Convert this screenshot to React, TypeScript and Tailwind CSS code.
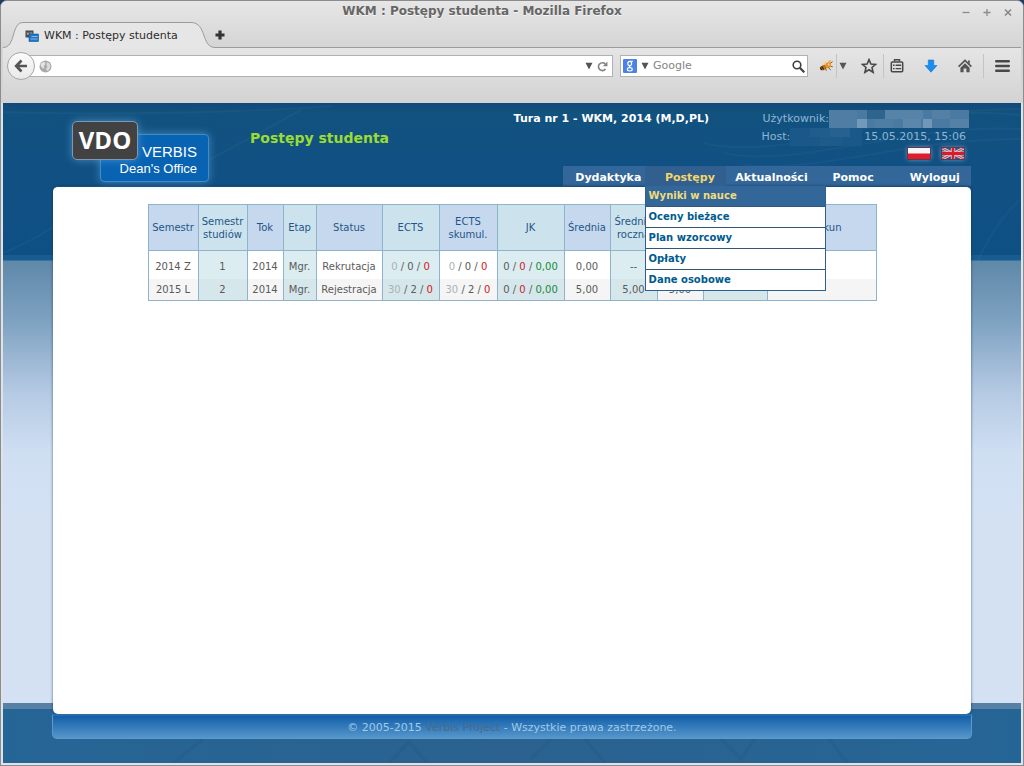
import type { ReactNode } from 'react';

const menuItems = ['Dydaktyka', 'Postępy', 'Aktualności', 'Pomoc', 'Wyloguj'];
const subItems = ['Wyniki w nauce', 'Oceny bieżące', 'Plan wzorcowy', 'Opłaty', 'Dane osobowe'];

const columns = [
  { label: 'Semestr', width: 'w-[50px]' },
  { label: 'Semestr studiów', width: 'w-[49px]' },
  { label: 'Tok', width: 'w-[36px]' },
  { label: 'Etap', width: 'w-[33px]' },
  { label: 'Status', width: 'w-[66px]' },
  { label: 'ECTS', width: 'w-[57px]' },
  { label: 'ECTS skumul.', width: 'w-[58px]' },
  { label: 'JK', width: 'w-[67px]' },
  { label: 'Średnia', width: 'w-[46px]' },
  { label: 'Średnia roczna', width: 'w-[47px]' },
  { label: '', width: 'w-[46px]' },
  { label: '', width: 'w-[64px]' },
  { label: 'Dziekun', width: 'w-[109px]' },
];

// Columns drawn with the teal tint
const tinted = [false, true, false, true, false, true, false, true, false, true, false, true, false];

function Triple({ a, b, c, muted }: { a: string; b: string; c: string; muted?: boolean }) {
  return (
    <>
      <span className={muted ? 'text-[#aab2b4]' : ''}>{a}</span> /{' '}
      <span className={muted ? '' : 'text-[#c41e2a]'}>{b}</span> /{' '}
      <span className={muted ? 'text-[#d01820]' : 'text-[#128a3a]'}>{c}</span>
    </>
  );
}

const rows: ReactNode[][] = [
  [
    '2014 Z', '1', '2014', 'Mgr.', 'Rekrutacja',
    <Triple a="0" b="0" c="0" muted />,
    <Triple a="0" b="0" c="0" muted />,
    <Triple a="0" b="0" c="0,00" />,
    '0,00', '--', '', '', '',
  ],
  [
    '2015 L', '2', '2014', 'Mgr.', 'Rejestracja',
    <Triple a="30" b="2" c="0" muted />,
    <Triple a="30" b="2" c="0" muted />,
    <Triple a="0" b="0" c="0,00" />,
    '5,00', '5,00', '5,00', '', '',
  ],
];

function Caret() {
  return (
    <svg viewBox="0 0 8 8" className="h-2 w-2" aria-hidden="true">
      <path d="M0.5 0.8H7.5L4 7.6Z" fill="#555555" />
    </svg>
  );
}

function Divider() {
  return <div className="h-6 w-px bg-[#c4c4c4]" />;
}

function TitleBar() {
  return (
    <div className="flex h-[21px] items-center pr-[8px]">
      <div className="flex-1 text-center text-[12px] leading-[21px] font-bold text-[#666666] [text-shadow:0_1px_0_#f6f6f6]">
        WKM : Postępy studenta - Mozilla Firefox
      </div>
      <div className="flex gap-[11px] text-[#8b8b8b]">
        <button aria-label="Minimize" className="h-[10px] w-[10px]">
          <svg viewBox="0 0 10 10"><path d="M1.5 5.5H8.5" stroke="currentColor" strokeWidth="1.3" /></svg>
        </button>
        <button aria-label="Maximize" className="h-[10px] w-[10px]">
          <svg viewBox="0 0 10 10"><path d="M1.5 5.5H8.5M5 2V9" stroke="currentColor" strokeWidth="1.3" /></svg>
        </button>
        <button aria-label="Close" className="h-[10px] w-[10px]">
          <svg viewBox="0 0 10 10"><path d="M2 2.5L8 8.5M8 2.5L2 8.5" stroke="currentColor" strokeWidth="1.7" /></svg>
        </button>
      </div>
    </div>
  );
}

function TabStrip() {
  return (
    <div className="flex h-[26px] items-stretch">
      <svg viewBox="0 0 20 26" className="h-[26px] w-[20px]" aria-hidden="true">
        <path d="M0 25.5C13 25.5 8 0.5 20 0.5V26H0Z" fill="#e6e6e6" />
        <path d="M0 25.5C13 25.5 8 0.5 20 0.5" fill="none" stroke="#9b9b9b" />
      </svg>
      <div className="flex w-[168px] items-center border-t border-[#9b9b9b] bg-[#e6e6e6]">
        <svg viewBox="0 0 14 12" className="ml-[2px] h-3 w-[14px]" aria-hidden="true">
          <rect x="0.5" y="0.5" width="8" height="7" fill="#4a4a4a" />
          <path d="M2 2.5L3 5L4 2.5M5 3H7V5H5" stroke="#c8c8c8" fill="none" strokeWidth="0.8" />
          <rect x="4" y="4" width="9.5" height="7.5" fill="#1d75c4" stroke="#17568e" strokeWidth="0.6" />
          <path d="M6.5 6.5H12.5M5.5 9H12.5" stroke="#7fbaf0" />
        </svg>
        <span className="ml-[5px] pt-px text-[11px] whitespace-nowrap text-[#2c2c2c]">WKM : Postępy studenta</span>
      </div>
      <svg viewBox="0 0 24 26" className="h-[26px] w-[24px]" aria-hidden="true">
        <path d="M0 0.5C16 0.5 10 25.5 24 25.5V26H0Z" fill="#e6e6e6" />
        <path d="M0 0.5C16 0.5 10 25.5 24 25.5" fill="none" stroke="#9b9b9b" />
      </svg>
      <div className="flex flex-1 items-center border-b border-[#9b9b9b]">
        <button aria-label="New tab" className="h-[10px] w-[10px]">
          <svg viewBox="0 0 10 10"><path d="M5 0.5V9.5M0.5 5H9.5" stroke="#333333" strokeWidth="3.2" /></svg>
        </button>
      </div>
    </div>
  );
}

function Toolbar() {
  return (
    <div className="h-[55px] bg-linear-to-b from-[#e5e5e5] to-[#d3d3d3]">
      <div className="flex h-9 items-center pr-[11px] pl-[4px]">
        <button
          aria-label="Back"
          className="z-10 -mr-[14px] flex h-7 w-7 items-center justify-center rounded-full border border-[#a6a6a6] bg-linear-to-b from-[#fbfbfb] to-[#e9e9e9]"
        >
          <svg viewBox="0 0 14 14" className="h-[14px] w-[14px]" aria-hidden="true">
            <path d="M7.5 1.5L2.2 7L7.5 12.5M2.5 7H13" fill="none" stroke="#555555" strokeWidth="2.7" />
          </svg>
        </button>
        <div className="flex h-[22px] flex-1 items-center border border-[#b1b1b1] bg-white pr-[4px] pl-[17px]">
          <svg viewBox="0 0 13 13" className="h-[13px] w-[13px]" aria-hidden="true">
            <circle cx="6.5" cy="6.5" r="6" fill="#a9a9a9" />
            <path d="M1.5 4L4 2L6.5 2.5L6 5L4.5 6L5.5 8L4 8.5L2 6.5Z" fill="#e4e4e4" />
            <path d="M8 2L10.5 3.5L11.5 6.5L10 10L8 11L7 8.5L8.5 7L7.5 5Z" fill="#dcdcdc" />
          </svg>
          <input aria-label="Address" className="min-w-0 flex-1 bg-transparent text-[12px] outline-none" />
          <Caret />
          <button aria-label="Reload" className="ml-[4px] h-[11px] w-[11px]">
            <svg viewBox="0 0 12 12">
              <path d="M9.3 8.8A4.3 4.3 0 1 1 9 3.2" fill="none" stroke="#7f8489" strokeWidth="1.8" />
              <path d="M11.4 0.6V5.6H6.4Z" fill="#7f8489" />
            </svg>
          </button>
        </div>
        <div className="ml-[7px] flex h-[22px] w-[188px] items-center border border-[#b1b1b1] bg-white pr-[2px] pl-[2px]">
          <svg viewBox="0 0 14 14" className="h-[14px] w-[14px]" aria-hidden="true">
            <rect width="14" height="14" rx="1" fill="#4a82e8" />
            <ellipse cx="6.7" cy="4.5" rx="1.9" ry="2.1" fill="none" stroke="#ffffff" strokeWidth="1.2" />
            <path d="M7 2.3H10M7.6 6.6C5.6 7.4 6.4 8 7.8 8.7" fill="none" stroke="#ffffff" strokeWidth="1.1" />
            <ellipse cx="6.8" cy="10.3" rx="2.5" ry="1.7" fill="none" stroke="#ffffff" strokeWidth="1.1" />
          </svg>
          <span className="ml-[4px]"><Caret /></span>
          <input
            aria-label="Search"
            placeholder="Google"
            className="ml-[4px] min-w-0 flex-1 bg-transparent pt-px text-[11px] outline-none placeholder:text-[#858585]"
          />
          <button aria-label="Search with Google" className="h-[13px] w-[13px]">
            <svg viewBox="0 0 13 13">
              <circle cx="5" cy="5" r="3.8" fill="none" stroke="#3f3f3f" strokeWidth="1.6" />
              <path d="M7.8 7.8L12.3 12.3" stroke="#3f3f3f" strokeWidth="2.2" />
            </svg>
          </button>
        </div>
        <button aria-label="Firebug" className="ml-[11px] h-[14px] w-[14px]">
          <svg viewBox="0 0 14 14">
            <path d="M3.5 5.5L5.5 2.8L8 2.6L7.5 5.5Z" fill="#f6cf98" />
            <path d="M8 4.5L10 1.2L12.4 1.2L12 4Z" fill="#efb460" />
            <ellipse cx="4.3" cy="8.6" rx="3.6" ry="2.4" transform="rotate(-24 4.3 8.6)" fill="#b9721e" />
            <path d="M2.8 7.2L4.6 10.6M1.4 8.2L2.6 11" stroke="#3f260b" strokeWidth="1.2" />
            <circle cx="9.2" cy="6.3" r="2.9" fill="#e8942a" />
            <circle cx="9.8" cy="5.5" r="1" fill="#f9cf8a" />
            <path d="M9.5 8.8L11.8 11M6.6 9.4L7.4 11.8M11.4 4.4L13.6 2.6M12 7.4L13.8 7.8" stroke="#6b4312" strokeWidth="0.8" />
          </svg>
        </button>
        <div className="ml-[3px]"><Divider /></div>
        <button aria-label="Firebug menu" className="ml-[2px] h-2 w-2"><Caret /></button>
        <button aria-label="Bookmark this page" className="ml-[14px] h-4 w-4">
          <svg viewBox="0 0 16 16">
            <path d="M8 1.6L9.9 6L14.6 6.4L11 9.5L12.1 14.2L8 11.7L3.9 14.2L5 9.5L1.4 6.4L6.1 6Z" fill="none" stroke="#484848" strokeWidth="1.6" />
          </svg>
        </button>
        <div className="ml-[6px]"><Divider /></div>
        <button aria-label="Bookmarks" className="ml-[6px] h-[14px] w-[14px]">
          <svg viewBox="0 0 14 14">
            <path d="M4.5 2.5V0.8H9.5V2.5" fill="none" stroke="#484848" strokeWidth="1.4" />
            <rect x="1.3" y="3" width="11.4" height="9.8" rx="1" fill="none" stroke="#484848" strokeWidth="1.5" />
            <path d="M3 6.3H4.6M5.6 6.3H11.2M3 9.6H4.6M5.6 9.6H11.2" stroke="#484848" strokeWidth="1.4" />
          </svg>
        </button>
        <button aria-label="Downloads" className="ml-[20px] h-[14px] w-[14px]">
          <svg viewBox="0 0 14 14">
            <path d="M4.3 1H9.7V6.5H13L7 13.2L1 6.5H4.3Z" fill="#1a8df0" stroke="#1976cc" strokeWidth="0.6" />
          </svg>
        </button>
        <button aria-label="Home" className="ml-[20px] h-[14px] w-[14px]">
          <svg viewBox="0 0 14 14">
            <path d="M0.6 7.6L7 1.4L13.4 7.6" fill="none" stroke="#555555" strokeWidth="1.7" />
            <path d="M7 4.3L11.6 8.8V13.2H8.4V9.6H5.6V13.2H2.4V8.8Z" fill="#555555" />
            <path d="M10 1.6H11.8V5L10 3.4Z" fill="#555555" />
          </svg>
        </button>
        <div className="ml-[11px]"><Divider /></div>
        <button aria-label="Open menu" className="ml-[11px] h-[14px] w-[15px]">
          <svg viewBox="0 0 15 14">
            <path d="M1.3 2.3H13.7M1.3 7H13.7M1.3 11.7H13.7" stroke="#484848" strokeWidth="2.6" strokeLinecap="round" />
          </svg>
        </button>
      </div>
    </div>
  );
}

function Logo() {
  return (
    <div className="relative ml-[19px] h-[83px] w-[138px] shrink-0">
      <div className="absolute top-[31px] left-[28px] h-[48px] w-[109px] rounded-[4px] border border-[#3f8cc8] bg-[#0963b3] pr-[11px] text-right font-['Liberation_Sans',sans-serif] text-white shadow-[0_0_8px_rgba(90,160,215,0.7)]">
        <div className="pt-[8px] text-[15px] leading-[17px]">VERBIS</div>
        <div className="text-[13px] leading-[17px] whitespace-nowrap">Dean's Office</div>
      </div>
      <div className="absolute top-[18px] left-0 flex h-[39px] w-[66px] items-center justify-center rounded-[5px] border border-[#7f9ab0] bg-[#424242] pb-[2px] font-['Open_Sans',sans-serif] text-[24px] font-bold text-white shadow-[0_0_8px_rgba(90,160,215,0.7)]">
        VDO
      </div>
    </div>
  );
}

function UserMosaic() {
  return (
    <svg viewBox="0 0 140 18" className="h-[18px] w-[140px]" aria-hidden="true">
      <rect width="140" height="18" fill="#4a7aa1" />
      <rect x="0" width="28" height="18" fill="#4f7da3" />
      <rect x="28" y="9" width="10" height="9" fill="#7199b9" />
      <rect x="38" width="18" height="9" fill="#2d658f" />
      <rect x="46" y="9" width="18" height="9" fill="#4f7ea4" />
      <rect x="56" y="0" width="38" height="9" fill="#5883a8" />
      <rect x="74" y="9" width="18" height="9" fill="#5a87ab" />
      <rect x="94" y="9" width="9" height="9" fill="#7097b7" />
      <rect x="103" width="18" height="9" fill="#5480a5" />
      <rect x="121" y="9" width="19" height="9" fill="#5581a6" />
    </svg>
  );
}

function HostMosaic() {
  return (
    <svg viewBox="0 0 72 18" className="h-[18px] w-[72px]" aria-hidden="true">
      <rect width="72" height="18" fill="#1b588a" />
      <rect x="20" width="20" height="9" fill="#215d8c" />
      <rect x="40" width="20" height="9" fill="#27618f" />
      <rect x="30" y="9" width="22" height="9" fill="#1e5a8a" />
    </svg>
  );
}

function Flags() {
  return (
    <div className="flex h-5 items-start gap-[10px] pt-px pr-[6px]">
      <button aria-label="Polski" className="h-[13px] w-[24px] rounded-[2px] shadow-[0_0_4px_rgba(160,190,215,0.6)]">
        <svg viewBox="0 0 24 13">
          <rect width="24" height="13" fill="#5d3a52" />
          <rect x="1" y="1" width="22" height="6" fill="#f6f6f6" />
          <rect x="1" y="6.5" width="22" height="5.5" fill="#e01b2c" />
        </svg>
      </button>
      <button aria-label="English" className="h-[13px] w-[24px] rounded-[2px] shadow-[0_0_4px_rgba(160,190,215,0.6)]">
        <svg viewBox="0 0 24 13">
          <rect width="24" height="13" fill="#3a4f80" />
          <path d="M1 1L23 12M23 1L1 12" stroke="#dcdce6" strokeWidth="2.8" />
          <path d="M1 1L23 12M23 1L1 12" stroke="#d8434f" strokeWidth="1.2" />
          <path d="M12 1V12M1 6.5H23" stroke="#f0dce0" strokeWidth="4.2" />
          <path d="M12 1V12M1 6.5H23" stroke="#d91c2c" strokeWidth="2.8" />
          <rect x="0.5" y="0.5" width="23" height="12" fill="none" stroke="#5d3a52" />
        </svg>
      </button>
    </div>
  );
}

function Nav() {
  return (
    <nav className="grid h-5 w-[408px] grid-cols-5 bg-[#336699] text-[11px] leading-[24px] font-bold">
      {menuItems.map((item) =>
        item === 'Postępy' ? (
          <div key={item} className="relative">
            <a href="#postepy" className="block h-5 bg-[#305f90] pl-[9px] text-center text-[#f2d669]">{item}</a>
            <ul className="absolute top-full left-0 z-20 w-[181px] border-x border-b border-[#2f5f8c] bg-white text-[10px] leading-[20px]">
              {subItems.map((sub, i) => (
                <li
                  key={sub}
                  className={i === 0 ? 'bg-[#336699] text-[#efdc7c]' : 'border-t border-[#33557c] text-[#005b8e]'}
                >
                  <a href="#sub" className="block h-5 pl-[3px]">{sub}</a>
                </li>
              ))}
            </ul>
          </div>
        ) : (
          <a key={item} href="#menu" className="block h-5 pl-[9px] text-center text-white">{item}</a>
        ),
      )}
    </nav>
  );
}

function Header() {
  return (
    <header className="flex h-[83px]">
      <Logo />
      <h1 className="ml-[40px] pt-[25px] text-[14px] leading-[20px] font-bold whitespace-nowrap text-[#99dd33]">
        Postępy studenta
      </h1>
      <div className="ml-auto flex flex-col items-end pt-[7px]">
        <div className="flex gap-[52px]">
          <div className="text-[11px] leading-[18px] font-bold whitespace-nowrap text-white">
            Tura nr 1 - WKM, 2014 (M,D,PL)
          </div>
          <div className="flex w-[210px] flex-col items-end text-[11px] leading-[18px] whitespace-nowrap text-[#8fb6d3]">
            <div className="flex pr-[2px]">
              <span>Użytkownik:</span>
              <UserMosaic />
            </div>
            <div className="flex pr-[5px]">
              <span>Host:</span>
              <HostMosaic />
              <span className="ml-[2px]">15.05.2015, 15:06</span>
            </div>
            <Flags />
          </div>
        </div>
        <Nav />
      </div>
    </header>
  );
}

function ResultsTable() {
  return (
    <table className="mx-auto w-[728px] table-fixed border-collapse border border-[#8fb0c8] text-center text-[10px] text-[#5a5a5a]">
      <colgroup>
        {columns.map((c, i) => (
          <col key={i} className={c.width} />
        ))}
      </colgroup>
      <thead>
        <tr className="h-[46px] text-[#1f5688]">
          {columns.map((c, i) => (
            <th
              key={i}
              className={`border border-[#8fb3cb] p-0 leading-[13px] font-normal ${tinted[i] ? 'bg-[#cce3ee]' : 'bg-[#c6d8ee]'}`}
            >
              {c.label}
            </th>
          ))}
        </tr>
      </thead>
      <tbody>
        {rows.map((row, r) => (
          <tr key={r} className={r === 0 ? 'h-[28px]' : 'h-[22px]'}>
            {row.map((cell, i) => (
              <td
                key={i}
                className={`border-x border-[#8fb3cb] p-0 whitespace-nowrap ${r === 0 ? 'pt-[4px]' : ''} ${
                  tinted[i] ? (r === 0 ? 'bg-[#dcedf1]' : 'bg-[#d6e7ec]') : r === 0 ? 'bg-white' : 'bg-[#f5f5f5]'
                }`}
              >
                {cell}
              </td>
            ))}
          </tr>
        ))}
      </tbody>
    </table>
  );
}

function Swirls() {
  return (
    <svg viewBox="0 0 1018 157" preserveAspectRatio="none" className="absolute top-0 left-0 h-[157px] w-full" aria-hidden="true">
      <g fill="none" stroke="#5b93c0" strokeOpacity="0.09" strokeWidth="2">
        <path d="M780 10C860 30 920 2 1018 12" />
        <path d="M700 40C790 60 880 5 1018 6" />
        <path d="M720 50C800 66 900 20 1018 26" />
        <path d="M740 62C820 70 900 36 1018 36" />
        <path d="M0 9C90 12 240 10 330 3" />
        <path d="M200 60C230 45 270 22 300 6" />
        <path d="M975 157C988 130 1002 110 1018 96" />
        <path d="M0 150C20 142 35 134 50 124" />
      </g>
    </svg>
  );
}

function FooterPattern() {
  return (
    <svg viewBox="0 0 1018 24" preserveAspectRatio="none" className="h-6 w-full" aria-hidden="true">
      <g fill="none" stroke="#1c5079" strokeOpacity="0.2" strokeWidth="3">
        <path d="M200 0L170 24M386 24L406 3L424 24M548 0L528 20M582 0L602 24M718 0L738 20L752 0M826 0L844 24" />
      </g>
    </svg>
  );
}

export default function App() {
  return (
    <div className="flex min-h-screen flex-col bg-[#1f3c66] font-['DejaVu_Sans',sans-serif]">
      <div className="flex flex-1 flex-col rounded-t-[7px] border border-[#8c8c8c] bg-[#dadada]">
        <div className="rounded-t-[6px] bg-[linear-gradient(#e6e6e6,#d4d4d4_48px)] px-[2px]">
          <TitleBar />
          <TabStrip />
          <Toolbar />
        </div>
        <div className="flex flex-1 flex-col border-x-2 border-b-2 border-[#dde3ea]">
          <div className="relative flex flex-1 flex-col bg-[linear-gradient(#12497a,#12527f_10px,#115083_60px,#0f5084_152px,#175c90_152px,#175c90_157px,#5f88a9_158px,#7fa3c2_220px,#b5cae3_290px,#cfdff2_350px,#d3e1f3_420px)]">
            <Swirls />
            <div className="absolute inset-x-0 bottom-0 h-[60px] border-t-[6px] border-[#5681a4] bg-[linear-gradient(90deg,#256596,#2b628f_50%,#256596)]" />
            <div className="relative mx-[50px] flex flex-1 flex-col">
              <Header />
              <main className="flex-1 rounded-[5px] border-t border-[#1b4f7b] bg-white pt-[17px] shadow-[0_0_3px_rgba(20,50,90,0.7)]">
                <ResultsTable />
              </main>
              <footer className="-mx-px h-[25px] rounded-b-[5px] border border-t-2 border-[#5b9bcb] border-t-[#2b6ca3] bg-linear-to-b from-[#0f60aa] to-[#5596cb] text-center text-[11px] leading-[23px] text-[#9fcbe8]">
                © 2005-2015 <a href="#verbis" className="text-[#486a88]">Verbis Project</a> - Wszystkie prawa zastrzeżone.
              </footer>
            </div>
            <div className="relative flex"><FooterPattern /></div>
          </div>
        </div>
      </div>
    </div>
  );
}
